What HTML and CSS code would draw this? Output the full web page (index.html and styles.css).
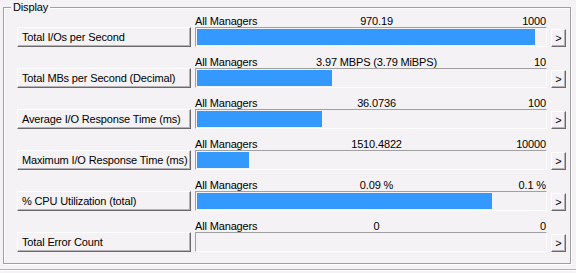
FILE: index.html
```html
<!DOCTYPE html>
<html>
<head>
  <meta charset="utf-8">
  <title>Display</title>
  <link rel="stylesheet" href="styles.css">
</head>
<body>
  <div class="display">
    <span class="legend">Display</span>

    <div class="row">
      <div class="head"><span>All Managers</span><span class="val">970.19</span><span class="max">1000</span></div>
      <button class="stat">Total I/Os per Second</button>
      <div class="bar"><div class="fill" style="width:338px"></div></div>
      <button class="more">&gt;</button>
    </div>

    <div class="row">
      <div class="head"><span>All Managers</span><span class="val">3.97 MBPS (3.79 MiBPS)</span><span class="max">10</span></div>
      <button class="stat">Total MBs per Second (Decimal)</button>
      <div class="bar"><div class="fill" style="width:135px"></div></div>
      <button class="more">&gt;</button>
    </div>

    <div class="row">
      <div class="head"><span>All Managers</span><span class="val">36.0736</span><span class="max">100</span></div>
      <button class="stat">Average I/O Response Time (ms)</button>
      <div class="bar"><div class="fill" style="width:125px"></div></div>
      <button class="more">&gt;</button>
    </div>

    <div class="row">
      <div class="head"><span>All Managers</span><span class="val">1510.4822</span><span class="max">10000</span></div>
      <button class="stat">Maximum I/O Response Time (ms)</button>
      <div class="bar"><div class="fill" style="width:52px"></div></div>
      <button class="more">&gt;</button>
    </div>

    <div class="row">
      <div class="head"><span>All Managers</span><span class="val">0.09 %</span><span class="max">0.1 %</span></div>
      <button class="stat">% CPU Utilization (total)</button>
      <div class="bar"><div class="fill" style="width:295px"></div></div>
      <button class="more">&gt;</button>
    </div>

    <div class="row">
      <div class="head"><span>All Managers</span><span class="val">0</span><span class="max">0</span></div>
      <button class="stat">Total Error Count</button>
      <div class="bar"><div class="fill" style="width:0"></div></div>
      <button class="more">&gt;</button>
    </div>
  </div>
  <div class="next-group"></div>
</body>
</html>
```

FILE: styles.css
```css
body {
  margin: 0;
  background: #f4f2f5;
  color: #000;
  font-family: "Liberation Sans", Arial, sans-serif;
  font-size: 11px;
  letter-spacing: -0.15px;
}

/* group box */
.display {
  position: relative;
  box-sizing: border-box;
  width: 568px;
  height: 257px;
  margin: 7px 0 0 3px;
  padding: 7px 0 0 13px;
  border: 1px solid #a0a0a0;
  box-shadow: inset 1px 1px #fff, 1px 1px #fff;
  display: flex;
  flex-direction: column;
  gap: 9px;
}
.legend {
  position: absolute;
  top: -7px;
  left: 7px;
  padding: 0 2px;
  line-height: 13px;
  background: #f4f2f5;
}

.row {
  display: grid;
  grid-template-columns: 174px 352px 15px;
  grid-template-rows: 12px 20px;
  column-gap: 4px;
}
.head {
  grid-column: 2 / 4;
  grid-row: 1;
  display: grid;
  grid-template-columns: 1fr auto 1fr;
  padding-right: 8px;
  line-height: 12px;
  white-space: nowrap;
}
.head .max {
  text-align: right;
  padding-right: 12px;
}

button {
  font: inherit;
  letter-spacing: inherit;
  color: #000;
  margin: 0;
  background: #f4f2f5;
  border: 1px solid;
  border-color: #fff #6a6a6a #6a6a6a #fff;
  box-shadow: inset -1px -1px #b4b2b5;
  white-space: nowrap;
}
.stat {
  grid-column: 1;
  grid-row: 2;
  height: 20px;
  padding: 0 4px;
  text-align: left;
  line-height: 18px;
}
.more {
  grid-column: 3;
  grid-row: 2;
  align-self: end;
  height: 18px;
  padding: 0;
  display: flex;
  align-items: center;
  justify-content: center;
}

.bar {
  grid-column: 2;
  grid-row: 2;
  box-sizing: border-box;
  padding: 1px;
  border: 1px solid;
  border-color: #a0a0a0 #fff #fff #a0a0a0;
}
.fill {
  height: 100%;
  background: #3399ff;
}

.next-group {
  margin-top: 5px;
  border-top: 1px solid #b4b2b5;
  border-bottom: 1px solid #fff;
}
```
